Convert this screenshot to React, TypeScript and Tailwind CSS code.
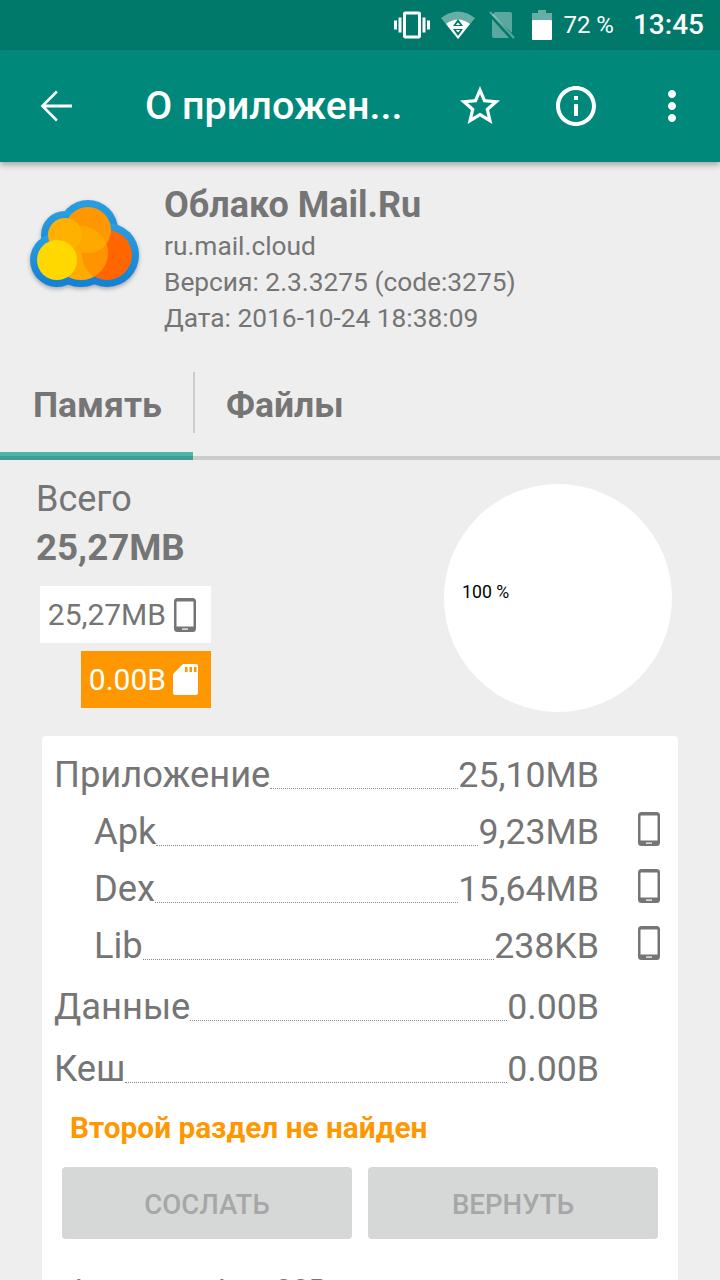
import type { ReactNode } from "react";

const font = { fontFamily: "Roboto, sans-serif" };

function Icon({ d, className }: { d: string; className: string }) {
    return (
        <svg viewBox="0 0 24 24" fill="currentColor" className={className}>
            <path d={d} />
        </svg>
    );
}

function PhoneIcon({ className }: { className: string }) {
    return (
        <svg viewBox="0 0 22 34" className={className}>
            <rect x="0" y="0" width="22" height="34" rx="3.5" fill="currentColor" />
            <rect x="2.5" y="3.5" width="17" height="25" rx="0.5" fill="#fff" />
            <rect x="8" y="30.5" width="6" height="1.2" fill="#fff" />
        </svg>
    );
}

function CloudLogo() {
    return (
        <svg viewBox="0 0 112 90" className="h-[90px] w-[112px] drop-shadow-[0_2px_2px_rgba(0,0,0,0.3)]">
            <defs>
                <linearGradient id="rim" x1="0" y1="0" x2="0" y2="1">
                    <stop offset="0" stopColor="#2a9fe0" />
                    <stop offset="1" stopColor="#1380d4" />
                </linearGradient>
            </defs>
            <g fill="url(#rim)">
                <circle cx="60" cy="31" r="30" />
                <circle cx="37" cy="36" r="24" />
                <circle cx="79" cy="56" r="32" />
                <circle cx="29" cy="61" r="27" />
                <circle cx="53" cy="54" r="34" />
            </g>
            <circle cx="53" cy="54" r="27" fill="#ffa000" />
            <circle cx="79" cy="56" r="25" fill="#ff6600" />
            <circle cx="60" cy="31" r="23" fill="#ff9800" />
            <circle cx="37" cy="36" r="17" fill="#ffb000" />
            <circle cx="53" cy="54" r="27" fill="#ffb300" fillOpacity="0.6" />
            <circle cx="29" cy="61" r="20" fill="#ffd800" />
        </svg>
    );
}

function Row({ label, value, indent, phone }: { label: string; value: string; indent?: boolean; phone?: boolean }) {
    return (
        <div className={indent ? "flex h-[57px] items-end pl-[40px]" : "flex h-[57px] items-end"}>
            <span className="text-[36.3px] leading-[44px]">{label}</span>
            <span className="mb-[8px] flex-1 border-b border-dotted border-[#888]" />
            <span className="text-[35.7px] leading-[44px]">{value}</span>
            <span className="flex w-[79px] justify-end pr-[18px] pb-[8px]">
                {phone && <PhoneIcon className="h-[34px] w-[22px] text-[#757575]" />}
            </span>
        </div>
    );
}

function Chip({ className, children }: { className: string; children: ReactNode }) {
    return <div className={"flex h-[57px] items-center justify-end text-[30px] " + className}>{children}</div>;
}

export default function App() {
    return (
        <div className="h-[1280px] w-[720px] overflow-hidden bg-[#eeeeee] text-[#757575]" style={font}>
            {/* status bar */}
            <div className="flex h-[50px] items-center justify-end bg-[#00796b] pr-[16px] text-white">
                <Icon
                    className="mr-[10px] h-[36px] w-[36px]"
                    d="M0 15h2V9H0v6zm3 2h2V7H3v10zm19-8v6h2V9h-2zm-3 8h2V7h-2v10zM16.5 3h-9C6.67 3 6 3.67 6 4.5v15c0 .83.67 1.5 1.5 1.5h9c.83 0 1.5-.67 1.5-1.5v-15c0-.83-.67-1.5-1.5-1.5zM16 19H8V5h8v14z"
                />
                <svg viewBox="0 0 36 30" className="mr-[13px] h-[30px] w-[36px]">
                    <path d="M18 29 1 8Q18 -5 35 8Z" fill="#fff" fillOpacity="0.4" />
                    <path d="M18 29 6 14Q18 5 30 14Z" fill="#fff" />
                    <path d="M18 9 23 16H13ZM18 26 13 19H23Z" fill="#00796b" />
                    <path d="M18 12.5 20.2 15H15.8ZM18 22.5 15.8 20H20.2Z" fill="#fff" />
                </svg>
                <svg viewBox="0 0 26 28" className="mr-[17px] h-[28px] w-[26px]">
                    <path d="M3 4 6 1H21Q23 1 23 3V22ZM3 8 20 27H5Q3 27 3 25Z" fill="#fff" fillOpacity="0.35" />
                    <path d="M1 1 25 27" stroke="#fff" strokeOpacity="0.35" strokeWidth="2" />
                </svg>
                <svg viewBox="0 0 20 30" className="mr-[11px] h-[30px] w-[20px]">
                    <path d="M6 0H14V3H20V10H0V3H6Z" fill="#fff" fillOpacity="0.4" />
                    <rect x="0" y="10" width="20" height="20" rx="1" fill="#fff" />
                </svg>
                <span className="mr-[19px] text-[24px] leading-none">72 %</span>
                <span className="text-[28px] leading-none font-medium">13:45</span>
            </div>

            {/* toolbar */}
            <div className="relative flex h-[112px] items-center bg-[#00897b] pl-[32px] text-white shadow-[0_3px_6px_rgba(0,0,0,0.3)]">
                <Icon
                    className="h-[48px] w-[48px]"
                    d="M20 11.2H6.9l6-6L12 4.3l-7.7 7.7 7.7 7.7.9-.9-6-6H20v-1.6z"
                />
                <span className="ml-[65px] w-[256px] text-[39.5px] leading-none font-medium whitespace-nowrap">О приложен...</span>
                <Icon
                    className="ml-[55px] h-[48px] w-[48px]"
                    d="M22 9.24l-7.19-.62L12 2 9.19 8.63 2 9.24l5.46 4.73L5.82 21 12 17.27 18.18 21l-1.63-7.03L22 9.24zM12 15.4l-3.76 2.27 1-4.28-3.32-2.88 4.38-.38L12 6.1l1.71 4.04 4.38.38-3.32 2.88 1 4.28L12 15.4z"
                />
                <Icon
                    className="ml-[48px] h-[48px] w-[48px]"
                    d="M11 17h2v-6h-2v6zm1-15C6.48 2 2 6.48 2 12s4.48 10 10 10 10-4.48 10-10S17.52 2 12 2zm0 18c-4.41 0-8-3.59-8-8s3.59-8 8-8 8 3.59 8 8-3.59 8-8 8zm-1-11h2V7h-2v2z"
                />
                <Icon
                    className="ml-[48px] h-[48px] w-[48px]"
                    d="M12 8c1.1 0 2-.9 2-2s-.9-2-2-2-2 .9-2 2 .9 2 2 2zm0 2c-1.1 0-2 .9-2 2s.9 2 2 2 2-.9 2-2-.9-2-2-2zm0 6c-1.1 0-2 .9-2 2s.9 2 2 2 2-.9 2-2-.9-2-2-2z"
                />
            </div>

            {/* app info */}
            <div className="flex h-[210px] pl-[28px]">
                <div className="mt-[37px] w-[136px]">
                    <CloudLogo />
                </div>
                <div className="pt-[21px] text-[26.3px] leading-[36px]">
                    <div className="text-[36px] leading-[45px] font-bold">Облако Mail.Ru</div>
                    <div>ru.mail.cloud</div>
                    <div>Версия: 2.3.3275 (code:3275)</div>
                    <div>Дата: 2016-10-24 18:38:09</div>
                </div>
            </div>

            {/* tabs */}
            <div className="flex h-[88px] border-b-4 border-[#cccccc] text-[35.5px] leading-[66px] font-bold">
                <div className="relative w-[193px] pl-[33px]">
                    Память
                    <span className="absolute top-[80px] left-0 h-[4px] w-[193px] bg-[#4db6ac]" />
                    <span className="absolute top-[84px] left-0 h-[4px] w-[193px] bg-[#439c92]" />
                </div>
                <div className="mb-[23px] border-l-2 border-[#cccccc] pl-[31px]">Файлы</div>
            </div>

            {/* summary */}
            <div className="flex h-[276px]">
                <div className="w-[444px] pl-[36px]">
                    <div className="pt-[16px] text-[36px] leading-[46px]">Всего</div>
                    <div className="pt-[2px] text-[36.7px] leading-[48px] font-bold">25,27MB</div>
                    <div className="mt-[14px] flex w-[175px] flex-col items-end gap-[8px]">
                        <Chip className="w-[171px] bg-white pr-[15px]">
                            25,27MB
                            <PhoneIcon className="ml-[8px] h-[34px] w-[22px] text-[#757575]" />
                        </Chip>
                        <Chip className="w-[130px] bg-[#ff9800] pr-[13px] text-white">
                            0.00B
                            <svg viewBox="0 0 25 31" className="ml-[7px] h-[31px] w-[25px]">
                                <path
                                    d="M10 0H23Q25 0 25 2V29Q25 31 23 31H2Q0 31 0 29V10ZM12 3V8H14.5V3ZM16.5 3V8H19V3ZM21 3V8H23.5V3Z"
                                    fill="#fff"
                                    fillRule="evenodd"
                                />
                            </svg>
                        </Chip>
                    </div>
                </div>
                <div className="mt-[24px] flex h-[228px] w-[228px] items-center rounded-full bg-white pb-[12px] pl-[18px] text-[17.7px] text-black">
                    100 %
                </div>
            </div>

            {/* details card */}
            <div className="mx-[42px] rounded-[4px] bg-white pt-[4px] pl-[12px]">
                <Row label="Приложение" value="25,10MB" />
                <Row label="Apk" value="9,23MB" indent phone />
                <Row label="Dex" value="15,64MB" indent phone />
                <Row label="Lib" value="238KB" indent phone />
                <div className="mt-[4px]">
                    <Row label="Данные" value="0.00B" />
                </div>
                <div className="mt-[5px]">
                    <Row label="Кеш" value="0.00B" />
                </div>
                <div className="mt-[19px] pl-[16px] text-[29.8px] leading-[36px] font-bold text-[#ff9800]">
                    Второй раздел не найден
                </div>
                <div className="mt-[21px] flex gap-[16px] pl-[8px] text-[27.6px] font-medium text-[#a6a7a7]">
                    <div className="flex h-[72px] w-[290px] items-center justify-center rounded-[4px] bg-[#d6d7d7] pt-[3px]">
                        СОСЛАТЬ
                    </div>
                    <div className="flex h-[72px] w-[290px] items-center justify-center rounded-[4px] bg-[#d6d7d7] pt-[3px]">
                        ВЕРНУТЬ
                    </div>
                </div>
                <div className="mt-[33px] pl-[15px] text-[30px] leading-[36px]">Архитект: Arm 32B</div>
            </div>
        </div>
    );
}
